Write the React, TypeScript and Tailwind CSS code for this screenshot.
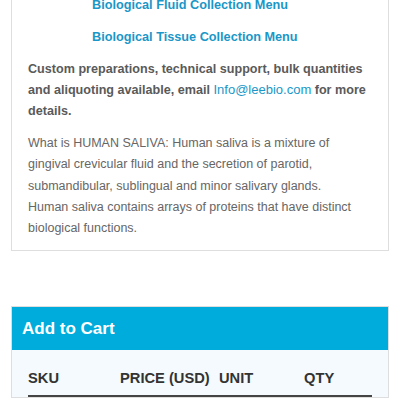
import React from 'react';

export default function App() {
  return (
    <div className="w-[400px] h-[400px] overflow-hidden bg-white font-['Liberation_Sans',Arial,sans-serif]">
      <div className="mx-[11px] -mt-[17px] border border-[#dedede] px-[16px] pt-[11px] pb-[11px]">
        <div className="pl-[64px] text-[12.7px] font-bold leading-[21px] text-[#1a97c8]">
          <a href="#" className="block">Biological Fluid Collection Menu</a>
          <a href="#" className="block mt-[11px]">Biological Tissue Collection Menu</a>
        </div>
        <p className="mt-[11px] text-[12.6px] font-bold leading-[21px] text-[#5a5a5a]">
          Custom preparations, technical support, bulk quantities and aliquoting available, email{' '}
          <a href="#" className="text-[13px] leading-[0] font-normal text-[#1a97c8]">Info@leebio.com</a> for more details.
        </p>
        <p className="mt-[11px] pr-[12px] text-[12.5px] leading-[21.25px] text-[#666]">
          What is HUMAN SALIVA: Human saliva is a mixture of gingival crevicular fluid and the secretion of parotid, submandibular, sublingual and minor salivary glands. Human saliva contains arrays of proteins that have distinct biological functions.
        </p>
      </div>

      <div className="mx-[11px] mt-[55px] border border-[#dedede] bg-[#f4fafd]">
        <div className="h-[43px] bg-[#00acdc] px-[10px] flex items-center">
          <h2 className="text-[17px] font-bold text-white">Add to Cart</h2>
        </div>
        <div className="px-[16px] pt-[17px]">
          <div className="grid grid-cols-[92px_99px_85px_1fr] border-b-2 border-[#444] pb-[6px] text-[14.7px] font-bold text-[#333]">
            <span>SKU</span>
            <span>PRICE (USD)</span>
            <span>UNIT</span>
            <span>QTY</span>
          </div>
        </div>
      </div>
    </div>
  );
}
